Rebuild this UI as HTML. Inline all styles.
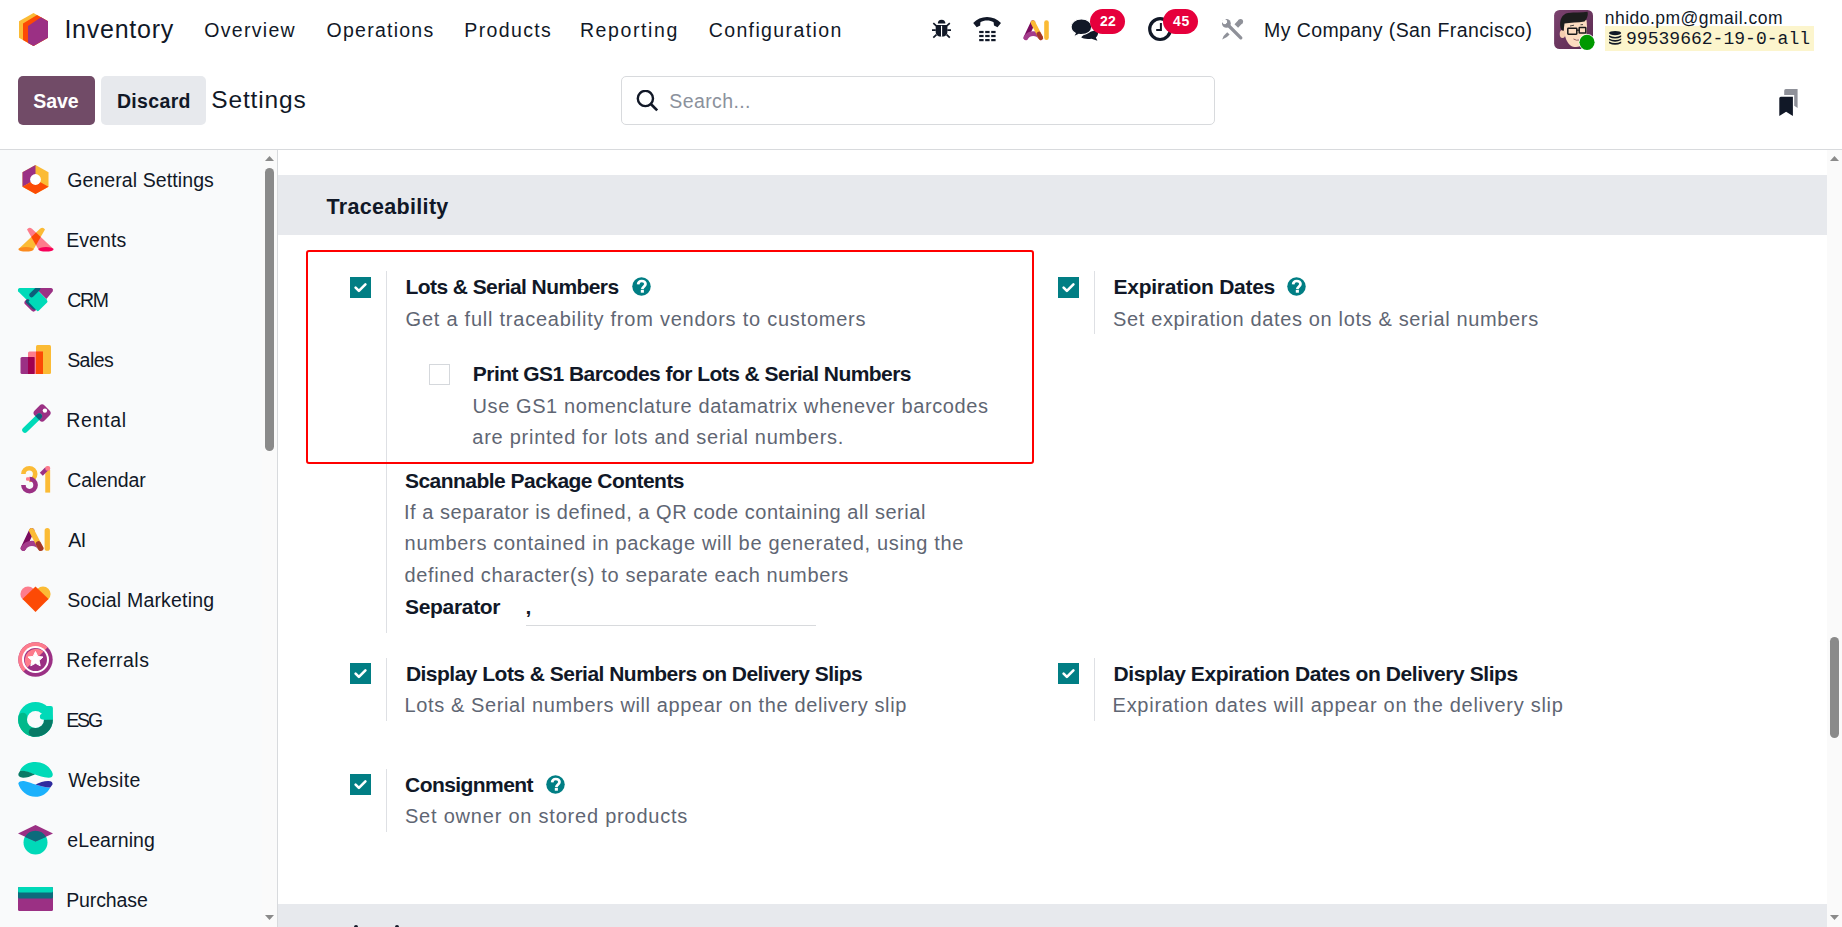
<!DOCTYPE html>
<html><head><meta charset="utf-8"><title>Settings</title>
<style>
html,body{margin:0;padding:0;}
body{width:1842px;height:927px;overflow:hidden;position:relative;background:#fff;font-family:"Liberation Sans",sans-serif;}
.t{position:absolute;white-space:pre;}
.b{position:absolute;display:block;}
</style></head><body>
<div class="b" style="left:0px;top:149px;width:1842px;height:1px;background:#d8dadd"></div>
<div class="b" style="left:0px;top:150px;width:277px;height:777px;background:#f9fafb"></div>
<div class="b" style="left:277px;top:150px;width:1px;height:777px;background:#d8dadd"></div>
<div class="b" style="left:262px;top:150px;width:15px;height:777px;background:#fafafa"></div>
<div class="b" style="left:265px;top:168px;width:9px;height:283px;background:#8a8a8a;border-radius:4.5px"></div>
<svg class="b" style="left:262px;top:150px" width="15" height="777" viewBox="0 0 15 777"><path d="M3 11 L7.5 6 L12 11 Z" fill="#8a8a8a"/><path d="M3 765 L12 765 L7.5 770 Z" fill="#8a8a8a"/></svg>
<div class="b" style="left:1827px;top:150px;width:15px;height:777px;background:#fafafa"></div>
<div class="b" style="left:1830px;top:637px;width:9px;height:101px;background:#8a8a8a;border-radius:4.5px"></div>
<svg class="b" style="left:1827px;top:150px" width="15" height="777" viewBox="0 0 15 777"><path d="M3 11 L7.5 6 L12 11 Z" fill="#8a8a8a"/><path d="M3 765 L12 765 L7.5 770 Z" fill="#8a8a8a"/></svg>
<div class="b" style="left:278px;top:175px;width:1549px;height:60px;background:#e7e9ed"></div>
<div class="b" style="left:278px;top:904px;width:1549px;height:23px;background:#e7e9ed"></div>
<div class="b" style="left:18px;top:76px;width:77px;height:49px;background:#714b67;border-radius:5px"></div>
<div class="b" style="left:101px;top:76px;width:105px;height:49px;background:#e7e9ed;border-radius:5px"></div>
<div class="b" style="left:621px;top:76px;width:594px;height:49px;border:1px solid #d8dadd;border-radius:5px;box-sizing:border-box;background:#fff"></div>
<svg class="b" style="left:636px;top:90px" width="24" height="24" viewBox="0 0 24 24"><circle cx="9.4" cy="8.5" r="7.6" fill="none" stroke="#111827" stroke-width="2.4"/><path d="M14.6 13.8 L21.2 20.4" stroke="#111827" stroke-width="2.7"/></svg>
<svg class="b" style="left:1770px;top:82px" width="36" height="40" viewBox="0 0 36 40"><path d="M15.8 7.1 H27.6 V26 L24.2 23.8 V13.1 H14.2 V8.7 Q14.2 7.1 15.8 7.1 Z" fill="#8f9199"/><path d="M10.8 14.7 H22.9 V33.9 L16.1 29.8 L9.3 33.9 V16.2 Q9.3 14.7 10.8 14.7 Z" fill="#111827"/></svg>
<div class="b" style="left:386px;top:271px;width:1px;height:362px;background:#dee0e4"></div>
<div class="b" style="left:386px;top:658px;width:1px;height:63px;background:#dee0e4"></div>
<div class="b" style="left:386px;top:769px;width:1px;height:63px;background:#dee0e4"></div>
<div class="b" style="left:1094px;top:271px;width:1px;height:63px;background:#dee0e4"></div>
<div class="b" style="left:1094px;top:658px;width:1px;height:63px;background:#dee0e4"></div>
<svg class="b" style="left:350px;top:277px" width="21" height="21" viewBox="0 0 21 21"><rect x="0" y="0" width="21" height="21" fill="#017e84"/><path d="M5.6 10.6 L8.9 13.9 L15.4 7.4" fill="none" stroke="#fff" stroke-width="2.6" stroke-linecap="round" stroke-linejoin="round"/></svg>
<svg class="b" style="left:429px;top:364px" width="21" height="21" viewBox="0 0 21 21"><rect x="0.5" y="0.5" width="20" height="20" fill="#fff" stroke="#d5d8dc"/></svg>
<svg class="b" style="left:350px;top:663px" width="21" height="21" viewBox="0 0 21 21"><rect x="0" y="0" width="21" height="21" fill="#017e84"/><path d="M5.6 10.6 L8.9 13.9 L15.4 7.4" fill="none" stroke="#fff" stroke-width="2.6" stroke-linecap="round" stroke-linejoin="round"/></svg>
<svg class="b" style="left:350px;top:774px" width="21" height="21" viewBox="0 0 21 21"><rect x="0" y="0" width="21" height="21" fill="#017e84"/><path d="M5.6 10.6 L8.9 13.9 L15.4 7.4" fill="none" stroke="#fff" stroke-width="2.6" stroke-linecap="round" stroke-linejoin="round"/></svg>
<svg class="b" style="left:1058px;top:277px" width="21" height="21" viewBox="0 0 21 21"><rect x="0" y="0" width="21" height="21" fill="#017e84"/><path d="M5.6 10.6 L8.9 13.9 L15.4 7.4" fill="none" stroke="#fff" stroke-width="2.6" stroke-linecap="round" stroke-linejoin="round"/></svg>
<svg class="b" style="left:1058px;top:663px" width="21" height="21" viewBox="0 0 21 21"><rect x="0" y="0" width="21" height="21" fill="#017e84"/><path d="M5.6 10.6 L8.9 13.9 L15.4 7.4" fill="none" stroke="#fff" stroke-width="2.6" stroke-linecap="round" stroke-linejoin="round"/></svg>
<svg class="b" style="left:631.5px;top:276.8px" width="19" height="19" viewBox="0 0 19 19"><circle cx="9.5" cy="9.5" r="9.25" fill="#017e84"/><path d="M6.1 7.4 C6.3 5.2 7.8 4 9.8 4 C11.9 4 13.5 5.3 13.5 7.1 C13.5 9.4 10.5 9.5 10.3 12.2" fill="none" stroke="#fff" stroke-width="2.7"/><rect x="8.8" y="12.9" width="3.1" height="2.8" fill="#fff"/></svg>
<svg class="b" style="left:1287.05px;top:276.85px" width="19" height="19" viewBox="0 0 19 19"><circle cx="9.5" cy="9.5" r="9.25" fill="#017e84"/><path d="M6.1 7.4 C6.3 5.2 7.8 4 9.8 4 C11.9 4 13.5 5.3 13.5 7.1 C13.5 9.4 10.5 9.5 10.3 12.2" fill="none" stroke="#fff" stroke-width="2.7"/><rect x="8.8" y="12.9" width="3.1" height="2.8" fill="#fff"/></svg>
<svg class="b" style="left:545.9px;top:774.9px" width="19" height="19" viewBox="0 0 19 19"><circle cx="9.5" cy="9.5" r="9.25" fill="#017e84"/><path d="M6.1 7.4 C6.3 5.2 7.8 4 9.8 4 C11.9 4 13.5 5.3 13.5 7.1 C13.5 9.4 10.5 9.5 10.3 12.2" fill="none" stroke="#fff" stroke-width="2.7"/><rect x="8.8" y="12.9" width="3.1" height="2.8" fill="#fff"/></svg>
<div class="b" style="left:526px;top:625px;width:290px;height:1px;background:#d8dadd"></div>
<div class="b" style="left:306px;top:250px;width:728px;height:214px;border:2px solid #ff0000;border-radius:3px;box-sizing:border-box"></div>
<svg class="b" style="left:19px;top:13px" width="29" height="33" viewBox="0 0 29 33"><path d="M14.5 0 L29 8.3 L29 24.7 L14.5 33 L0 24.7 L0 8.3 Z" fill="#fbbb35"/><path d="M18 2 L29 8.3 L29 24.7 L14.5 33 L4 27 L4 10.5 Z" fill="#fc4a05"/><path d="M22 4.3 L29 8.3 L29 24.7 L14.5 33 L9 29.9 L9 13 Z" fill="#9b3084"/></svg>
<svg class="b" style="left:926px;top:14px" width="32" height="30" viewBox="0 0 32 30"><path d="M11.8 9.6 A3.8 3.8 0 0 1 19.4 9.6 Z" fill="#111827"/><path d="M9.7 11 H21.4 V18 C21.4 21 19 22.7 15.55 22.7 C12 22.7 9.7 21 9.7 18 Z" fill="#111827"/><rect x="15" y="11.8" width="1.1" height="11" fill="#fff"/><path d="M7.3 9.1 L10.3 11.8 M23.8 9.1 L20.8 11.8 M6 16.2 H9.8 M25 16.2 H21.3 M7.3 23.6 L10.5 20.6 M23.8 23.6 L20.6 20.6" stroke="#111827" stroke-width="1.7"/></svg>
<svg class="b" style="left:968px;top:12px" width="40" height="34" viewBox="0 0 40 34"><path d="M5.2 11 C12 3 26 3 33 11 L29.5 15.3 L26 13.5 L25.6 10.2 C22 8 16 8 12.4 10.2 L12.2 13.5 L8.7 15.3 Z" fill="#111827"/><g fill="#111827"><rect x="11.2" y="18.9" width="4.4" height="2.2"/><rect x="17.2" y="18.9" width="4.4" height="2.2"/><rect x="23.2" y="18.9" width="4.4" height="2.2"/><rect x="11.2" y="22.9" width="4.4" height="2.2"/><rect x="17.2" y="22.9" width="4.4" height="2.2"/><rect x="23.2" y="22.9" width="4.4" height="2.2"/><rect x="11.2" y="27" width="4.4" height="2.2"/><rect x="17.2" y="27" width="4.4" height="2.2"/><rect x="23.2" y="27" width="4.4" height="2.2"/></g></svg>
<svg class="b" style="left:1021.8px;top:18.8px" width="28.4" height="22.4" viewBox="-1.2 -1.2 28.4 22.4"><path d="M9.8 2.4 L2.6 17.6" stroke="#7a0b5e" stroke-width="4.6" stroke-linecap="round"/><path d="M2.6 17.6 C6 12.2 13.8 12 17.6 17.6" fill="none" stroke="#a43c8c" stroke-width="4.6" stroke-linecap="round"/><path d="M9.8 2.4 L17.6 17.6" stroke="#fbbb35" stroke-width="4.6" stroke-linecap="round"/><path d="M15.6 13.8 L17.6 17.6" stroke="#a3352b" stroke-width="4.6" stroke-linecap="round"/><path d="M23.3 2.4 V17.6" stroke="#fbbb35" stroke-width="4.6" stroke-linecap="round"/></svg>
<svg class="b" style="left:1066px;top:12px" width="40" height="34" viewBox="0 0 40 34"><path d="M15.2 25.3 C17 23 22 20.5 27 19 L30.5 18 C32.8 20 32.5 23.5 29.8 25.6 L31.4 28.8 L25.5 26.8 C21 27.3 17 27 15.2 25.3 Z" fill="#111827"/><path d="M15.4 7 C21.5 7 25.7 10.3 25.7 14.8 C25.7 19.3 21.5 22.6 15.4 22.6 C14.5 22.6 13.6 22.5 12.8 22.4 L7.3 24.9 L9.3 21.2 C6.6 19.8 5.1 17.5 5.1 14.8 C5.1 10.3 9.3 7 15.4 7 Z" fill="#111827" stroke="#fff" stroke-width="1.1"/></svg>
<svg class="b" style="left:1148px;top:17px" width="25" height="25" viewBox="0 0 25 25"><circle cx="12.1" cy="12.1" r="10.4" fill="none" stroke="#111827" stroke-width="3.2"/><path d="M12.9 6 V12.9 H8.2" fill="none" stroke="#111827" stroke-width="2"/></svg>
<div class="b" style="left:1090px;top:9px;width:35px;height:25px;background:#e6003c;border-radius:12.5px"></div>
<div class="b" style="left:1163px;top:9px;width:35px;height:25px;background:#e6003c;border-radius:12.5px"></div>
<svg class="b" style="left:1215px;top:12px" width="35" height="35" viewBox="0 0 35 35"><circle cx="11.4" cy="11.4" r="4.4" fill="#8f9199"/><circle cx="9.9" cy="9.9" r="2.3" fill="#fff"/><path d="M6.5 9.5 L9.5 6.5 L11.5 8.5 L8.5 11.5 Z" fill="#fff"/><path d="M12.5 12.5 L25.8 25.8" stroke="#8f9199" stroke-width="3.3" stroke-linecap="round"/><path d="M21.3 14 L25.8 9.3" stroke="#8f9199" stroke-width="5"/><circle cx="25.6" cy="9.5" r="2.5" fill="#8f9199"/><path d="M12.2 20.2 L14.6 22.6 Q12 26 7.2 27.6 Q8.5 23 12.2 20.2 Z" fill="#8f9199"/></svg>
<svg class="b" style="left:1550px;top:6px" width="48" height="48" viewBox="0 0 48 48"><defs><linearGradient id="avg" x1="0" y1="0" x2="1" y2="1"><stop offset="0" stop-color="#7b426f"/><stop offset="1" stop-color="#5a2a4f"/></linearGradient></defs><rect x="4.1" y="3.9" width="38.9" height="39.1" rx="5.5" fill="url(#avg)"/><path d="M13.5 16 L36.5 14 C37.5 22 37 32 33 38 C30.5 41.5 24 42 20.5 39.5 C16 36 13.5 28 13.5 16 Z" fill="#fcdcc0"/><ellipse cx="12.5" cy="28" rx="2.8" ry="4" fill="#f6cdb0"/><path d="M10.5 22 C9 14 12 8 18 7 C25 6 32 7 37.5 5.8 C38.5 9 37 13 34.5 15.5 C28 16.5 20 16.8 14.5 17.5 L13.5 25 C12 24.5 11 23.5 10.5 22 Z" fill="#1d1d1d"/><rect x="17.8" y="22.2" width="9" height="6" rx="0.6" fill="none" stroke="#1a1a1a" stroke-width="1.5"/><rect x="29.2" y="21.5" width="6.6" height="5.6" rx="0.6" fill="none" stroke="#1a1a1a" stroke-width="1.5"/><path d="M26.8 24.2 H29.2" stroke="#1a1a1a" stroke-width="1.2"/><path d="M20 20 L24 19.2 M30.5 18.8 L33 18.6" stroke="#333" stroke-width="0.9"/><path d="M23.5 33 Q26.5 34.8 29.5 34" fill="#fff" stroke="#7a3d3d" stroke-width="0.8"/><circle cx="37" cy="36.3" r="8.3" fill="#fff"/><circle cx="37" cy="36.3" r="7.6" fill="#009900"/></svg>
<div class="b" style="left:1605px;top:26px;width:209px;height:25px;background:#fcf5cd"></div>
<svg class="b" style="left:1608.7px;top:31px" width="13" height="15" viewBox="0 0 13 15"><ellipse cx="6.1" cy="2.1" rx="6.1" ry="2.1" fill="#111827"/><path d="M0 4.3 Q6.1 7.5 12.2 4.3 L12.2 6.0 Q6.1 9.2 0 6.0 Z" fill="#111827"/><path d="M0 7.4 Q6.1 10.6 12.2 7.4 L12.2 9.1 Q6.1 12.3 0 9.1 Z" fill="#111827"/><path d="M0 10.5 Q6.1 13.7 12.2 10.5 L12.2 12.2 Q6.1 15.4 0 12.2 Z" fill="#111827"/></svg>
<svg class="b" style="left:22px;top:164.8px" width="27" height="29" viewBox="0 0 28 30"><path d="M14 0 L27.5 7.5 L27.5 22.5 L14 30 L0.5 22.5 L0.5 7.5 Z" fill="#fbbb35"/><path d="M14 0 L0.5 7.5 L0.5 22.5 L14 15 Z" fill="#9b3084"/><path d="M0.5 22.5 L14 30 L27.5 22.5 L14 15 Z" fill="#fc4a05"/><circle cx="14" cy="15" r="5.6" fill="#fff"/></svg>
<svg class="b" style="left:18px;top:227px" width="36" height="25" viewBox="0 0 36 25"><defs><clipPath id="evy"><path d="M22 1.8 Q25 -0.6 27 2.6 L15.5 22.5 L0.5 22 Z"/></clipPath></defs><path d="M22 1.8 Q25 -0.6 27 2.6 L15.5 22.5 L0.5 22 Z" fill="#fbbb35"/><path d="M9 2.6 Q11 -0.6 14 1.8 L35.5 22 L20.5 22.5 Z" fill="#fd7c8c"/><path d="M9 2.6 Q11 -0.6 14 1.8 L35.5 22 L20.5 22.5 Z" fill="#fc4a05" clip-path="url(#evy)"/><ellipse cx="8" cy="22.3" rx="7.6" ry="2.3" fill="#fb8a1e"/><ellipse cx="28" cy="22.3" rx="7.6" ry="2.3" fill="#f8005a"/></svg>
<svg class="b" style="left:14px;top:282px" width="44" height="34" viewBox="0 0 44 34"><path d="M5.5 6 H21.6 L33.2 18 L23.5 28.6 L4.2 9.6 Q3.2 6.8 5.5 6 Z" fill="#00dab8"/><path d="M21.6 6 H37.2 Q39.8 6.6 38.6 9.5 L32.4 17 Z" fill="#9b3084"/><path d="M13.5 20.5 L19.5 26.5" stroke="#9b3084" stroke-width="6" stroke-linecap="round"/><path d="M13.8 19.4 L20.2 25.6" stroke="#0d5f7a" stroke-width="4.2" stroke-linecap="round"/><defs><clipPath id="crmc"><rect x="0" y="6" width="44" height="28"/></clipPath></defs><path d="M17.6 13 L24 6.6" stroke="#0d5f7a" stroke-width="4.6" stroke-linecap="round" clip-path="url(#crmc)"/><path d="M24.2 12.4 L32.2 19.5 L23.8 27.8 L16 19.7 Z" fill="#00dab8" stroke="#00dab8" stroke-width="2.6" stroke-linejoin="round"/></svg>
<svg class="b" style="left:20px;top:345px" width="31" height="29" viewBox="0 0 31 29"><rect x="16" y="0" width="15" height="29" rx="1.5" fill="#fbbb35"/><rect x="8" y="6.5" width="15" height="22.5" rx="1.5" fill="#fd7c8c"/><rect x="16" y="6.5" width="7" height="22.5" fill="#fc4a05"/><rect x="0.5" y="12" width="14" height="17" rx="1.5" fill="#9b3084"/><rect x="8" y="12" width="6.5" height="17" fill="#a0004f"/></svg>
<svg class="b" style="left:16px;top:398px" width="42" height="40" viewBox="0 0 42 40"><defs><clipPath id="rkh"><rect x="19.1" y="8" width="14" height="14" rx="3.5" transform="rotate(45 26.1 15)"/></clipPath></defs><rect x="19.1" y="8" width="14" height="14" rx="3.5" transform="rotate(45 26.1 15)" fill="#9b3084"/><circle cx="28.9" cy="12.6" r="2.2" fill="#fff"/><path d="M9 32 L23.2 18.2" stroke="#00dab8" stroke-width="5.6" stroke-linecap="round"/><path d="M9 32 L23.2 18.2" stroke="#0d5f7a" stroke-width="5.6" stroke-linecap="round" clip-path="url(#rkh)"/></svg>
<svg class="b" style="left:14px;top:460px" width="44" height="40" viewBox="0 0 44 40"><path d="M9.4 14.1 A5.9 5.9 0 1 1 15.3 20" fill="none" stroke="#fbbb35" stroke-width="4.6"/><path d="M15.5 19 A6.1 6.1 0 1 1 9.4 25.1" fill="none" stroke="#9b3084" stroke-width="4.6"/><rect x="12" y="17.2" width="4" height="3.5" rx="1.2" fill="#fd7c8c"/><path d="M33.7 10 V32.6" stroke="#fbbb35" stroke-width="4.9"/><path d="M27.3 14.3 L32.8 8.8" stroke="#9b3084" stroke-width="4.2"/><rect x="31.3" y="6" width="4.9" height="4.8" rx="2" fill="#fd7c8c"/></svg>
<svg class="b" style="left:18.615384615384617px;top:525.56px" width="32.77" height="26.88" viewBox="-1.2 -1.2 28.4 22.4"><path d="M9.8 2.4 L2.6 17.6" stroke="#7a0b5e" stroke-width="4.6" stroke-linecap="round"/><path d="M2.6 17.6 C6 12.2 13.8 12 17.6 17.6" fill="none" stroke="#a43c8c" stroke-width="4.6" stroke-linecap="round"/><path d="M9.8 2.4 L17.6 17.6" stroke="#fbbb35" stroke-width="4.6" stroke-linecap="round"/><path d="M15.6 13.8 L17.6 17.6" stroke="#a3352b" stroke-width="4.6" stroke-linecap="round"/><path d="M23.3 2.4 V17.6" stroke="#fbbb35" stroke-width="4.6" stroke-linecap="round"/></svg>
<svg class="b" style="left:20px;top:586px" width="31" height="27" viewBox="0 0 31 27"><circle cx="8" cy="8" r="7.6" fill="#fd7c8c"/><circle cx="23" cy="8" r="7.6" fill="#fbbb35"/><path d="M2.5 13 L15.5 26 L28.5 13 L15.5 0.5 Z" fill="#fc4a05"/></svg>
<svg class="b" style="left:18px;top:642px" width="35" height="35" viewBox="0 0 35 35"><circle cx="17.5" cy="17.5" r="17.2" fill="#9b3084"/><path d="M5.3 29.7 A17.2 17.2 0 0 1 29.7 5.3 Z" fill="#fd7c8c"/><circle cx="17.5" cy="17.5" r="13.5" fill="#fff"/><circle cx="17.5" cy="17.5" r="11.5" fill="#9b3084"/><path d="M9.4 25.6 A11.5 11.5 0 0 1 25.6 9.4 Z" fill="#fd7c8c"/><path d="M17.5 9.5 L19.8 14.4 L25 15 L21.1 18.6 L22.2 23.8 L17.5 21.2 L12.8 23.8 L13.9 18.6 L10 15 L15.2 14.4 Z" fill="#fff" stroke="#fff" stroke-width="1" stroke-linejoin="round"/></svg>
<svg class="b" style="left:14px;top:698px" width="44" height="44" viewBox="0 0 44 44"><circle cx="21.5" cy="21.4" r="17.4" fill="#00dab8"/><path d="M8.75 19.15 A12.95 12.95 0 0 0 19.25 34.15" fill="none" stroke="#00b98b" stroke-width="8.9" stroke-linecap="round"/><path d="M19.25 34.15 A12.95 12.95 0 0 0 34.45 21.4" fill="none" stroke="#077a66" stroke-width="8.9"/><circle cx="19.25" cy="34.15" r="4.45" fill="#077a66"/><circle cx="21.5" cy="21.4" r="8.5" fill="#f9fafb"/><path d="M30 8 H36.9 Q38.9 8 38.9 10 V21.4 H30 Z" fill="#00dab8"/><rect x="25.9" y="15.8" width="7" height="5.6" rx="2.7" fill="#00dab8"/><rect x="29" y="18" width="4" height="3.4" fill="#00dab8"/></svg>
<svg class="b" style="left:14px;top:758px" width="44" height="44" viewBox="0 0 44 44"><path d="M5.8 12.8 C9 6.5 15 4 21.5 4 C30 4 37 9.5 38.8 16 C39 19 37 19.8 34.5 19.7 C29 19.5 25 17.5 21 16.4 C15 14.8 9.5 12.5 5.8 12.8 Z" fill="#00dab8"/><path d="M6 13 C10 12.3 15 14 21 16.4 C16 18.5 12.5 19.8 9 19.7 C6 19.6 3.8 18 4.5 15.5 Z" fill="#077a66"/><path d="M4.3 25.5 C5 23.3 8 22.8 11 23.3 C15 24 18 25.5 21.5 26.5 C26 28 31 29.5 36.3 29.5 C33.5 35.5 27.5 38.8 21.5 38.8 C13 38.8 6 32.5 4.3 25.5 Z" fill="#1cb1fc"/><path d="M21.5 26.5 C25 24.8 30 23 34 23 C37.5 22.8 39 24.5 38.5 26.5 L36.3 29.5 C31 29.5 26 28 21.5 26.5 Z" fill="#2e2a9e"/></svg>
<svg class="b" style="left:18px;top:825px" width="35" height="30" viewBox="0 0 35 30"><circle cx="17.5" cy="17.5" r="12" fill="#00d9b8"/><path d="M0 8.5 L17.5 0 L35 8.5 L17.5 16.5 Z" fill="#9b3084"/><path d="M7 12 A12 12 0 0 1 28 12 L17.5 16.5 Z" fill="#0d6b7c"/></svg>
<svg class="b" style="left:18px;top:887px" width="35" height="25" viewBox="0 0 35 25"><rect x="0" y="0" width="35" height="24" rx="1.5" fill="#9b3084"/><rect x="0" y="0" width="35" height="11.5" rx="1.5" fill="#0d6b7c"/><rect x="0" y="0" width="35" height="5.5" rx="1.5" fill="#00d9b8"/></svg>
<div class="t" style="left:64.4px;top:17.0px;font-family:'Liberation Sans',sans-serif;font-size:25px;line-height:25px;font-weight:400;letter-spacing:0.762px;color:#111827">Inventory</div>
<div class="t" style="left:204.2px;top:21.0px;font-family:'Liberation Sans',sans-serif;font-size:19.5px;line-height:19.5px;font-weight:400;letter-spacing:1.314px;color:#111827">Overview</div>
<div class="t" style="left:326.5px;top:21.0px;font-family:'Liberation Sans',sans-serif;font-size:19.5px;line-height:19.5px;font-weight:400;letter-spacing:1.256px;color:#111827">Operations</div>
<div class="t" style="left:464.3px;top:21.0px;font-family:'Liberation Sans',sans-serif;font-size:19.5px;line-height:19.5px;font-weight:400;letter-spacing:1.371px;color:#111827">Products</div>
<div class="t" style="left:579.9px;top:21.0px;font-family:'Liberation Sans',sans-serif;font-size:19.5px;line-height:19.5px;font-weight:400;letter-spacing:1.612px;color:#111827">Reporting</div>
<div class="t" style="left:708.7px;top:21.0px;font-family:'Liberation Sans',sans-serif;font-size:19.5px;line-height:19.5px;font-weight:400;letter-spacing:1.383px;color:#111827">Configuration</div>
<div class="t" style="left:1264.0px;top:21.0px;font-family:'Liberation Sans',sans-serif;font-size:19.5px;line-height:19.5px;font-weight:400;letter-spacing:0.408px;color:#111827">My Company (San Francisco)</div>
<div class="t" style="left:1604.7px;top:9.8px;font-family:'Liberation Sans',sans-serif;font-size:17.5px;line-height:17.5px;font-weight:400;letter-spacing:0.488px;color:#111827">nhido.pm@gmail.com</div>
<div class="t" style="left:1626.0px;top:29.9px;font-family:'Liberation Mono',sans-serif;font-size:18px;line-height:18px;font-weight:400;letter-spacing:0.025px;color:#111827">99539662-19-0-all</div>
<div class="t" style="left:1100.0px;top:14.0px;font-family:'Liberation Sans',sans-serif;font-size:14px;line-height:14px;font-weight:700;letter-spacing:0.3px;color:#ffffff">22</div>
<div class="t" style="left:1172.9px;top:14.0px;font-family:'Liberation Sans',sans-serif;font-size:14px;line-height:14px;font-weight:700;letter-spacing:0.8px;color:#ffffff">45</div>
<div class="t" style="left:33.2px;top:92.0px;font-family:'Liberation Sans',sans-serif;font-size:19.5px;line-height:19.5px;font-weight:700;letter-spacing:-0.067px;color:#ffffff">Save</div>
<div class="t" style="left:116.9px;top:92.0px;font-family:'Liberation Sans',sans-serif;font-size:19.5px;line-height:19.5px;font-weight:700;letter-spacing:0.35px;color:#111827">Discard</div>
<div class="t" style="left:211.3px;top:87.9px;font-family:'Liberation Sans',sans-serif;font-size:24.5px;line-height:24.5px;font-weight:400;letter-spacing:0.843px;color:#111827">Settings</div>
<div class="t" style="left:669.3px;top:92.0px;font-family:'Liberation Sans',sans-serif;font-size:19.5px;line-height:19.5px;font-weight:400;letter-spacing:0.388px;color:#8b919c">Search...</div>
<div class="t" style="left:67.2px;top:171.0px;font-family:'Liberation Sans',sans-serif;font-size:19.5px;line-height:19.5px;font-weight:400;letter-spacing:0.093px;color:#111827">General Settings</div>
<div class="t" style="left:66.2px;top:231.0px;font-family:'Liberation Sans',sans-serif;font-size:19.5px;line-height:19.5px;font-weight:400;letter-spacing:0.08px;color:#111827">Events</div>
<div class="t" style="left:67.2px;top:291.0px;font-family:'Liberation Sans',sans-serif;font-size:19.5px;line-height:19.5px;font-weight:400;letter-spacing:-1.25px;color:#111827">CRM</div>
<div class="t" style="left:67.2px;top:351.0px;font-family:'Liberation Sans',sans-serif;font-size:19.5px;line-height:19.5px;font-weight:400;letter-spacing:-0.575px;color:#111827">Sales</div>
<div class="t" style="left:66.2px;top:411.0px;font-family:'Liberation Sans',sans-serif;font-size:19.5px;line-height:19.5px;font-weight:400;letter-spacing:0.72px;color:#111827">Rental</div>
<div class="t" style="left:67.2px;top:471.0px;font-family:'Liberation Sans',sans-serif;font-size:19.5px;line-height:19.5px;font-weight:400;letter-spacing:-0.071px;color:#111827">Calendar</div>
<div class="t" style="left:68.2px;top:531.0px;font-family:'Liberation Sans',sans-serif;font-size:19.5px;line-height:19.5px;font-weight:400;letter-spacing:-0.4px;color:#111827">AI</div>
<div class="t" style="left:67.2px;top:591.0px;font-family:'Liberation Sans',sans-serif;font-size:19.5px;line-height:19.5px;font-weight:400;letter-spacing:0.18px;color:#111827">Social Marketing</div>
<div class="t" style="left:66.2px;top:651.0px;font-family:'Liberation Sans',sans-serif;font-size:19.5px;line-height:19.5px;font-weight:400;letter-spacing:0.45px;color:#111827">Referrals</div>
<div class="t" style="left:66.2px;top:711.0px;font-family:'Liberation Sans',sans-serif;font-size:19.5px;line-height:19.5px;font-weight:400;letter-spacing:-2.1px;color:#111827">ESG</div>
<div class="t" style="left:68.2px;top:771.0px;font-family:'Liberation Sans',sans-serif;font-size:19.5px;line-height:19.5px;font-weight:400;letter-spacing:0.333px;color:#111827">Website</div>
<div class="t" style="left:67.2px;top:831.0px;font-family:'Liberation Sans',sans-serif;font-size:19.5px;line-height:19.5px;font-weight:400;letter-spacing:0.125px;color:#111827">eLearning</div>
<div class="t" style="left:66.2px;top:891.0px;font-family:'Liberation Sans',sans-serif;font-size:19.5px;line-height:19.5px;font-weight:400;letter-spacing:-0.114px;color:#111827">Purchase</div>
<div class="t" style="left:326.5px;top:196.7px;font-family:'Liberation Sans',sans-serif;font-size:21.5px;line-height:21.5px;font-weight:700;letter-spacing:0.318px;color:#111827">Traceability</div>
<div class="t" style="left:405.6px;top:276.1px;font-family:'Liberation Sans',sans-serif;font-size:21px;line-height:21px;font-weight:700;letter-spacing:-0.585px;color:#111827">Lots &amp; Serial Numbers</div>
<div class="t" style="left:405.6px;top:308.7px;font-family:'Liberation Sans',sans-serif;font-size:20px;line-height:20px;font-weight:400;letter-spacing:0.758px;color:#5f6673">Get a full traceability from vendors to customers</div>
<div class="t" style="left:472.8px;top:363.1px;font-family:'Liberation Sans',sans-serif;font-size:21px;line-height:21px;font-weight:700;letter-spacing:-0.544px;color:#111827">Print GS1 Barcodes for Lots &amp; Serial Numbers</div>
<div class="t" style="left:472.5px;top:395.7px;font-family:'Liberation Sans',sans-serif;font-size:20px;line-height:20px;font-weight:400;letter-spacing:0.594px;color:#5f6673">Use GS1 nomenclature datamatrix whenever barcodes</div>
<div class="t" style="left:472.3px;top:426.8px;font-family:'Liberation Sans',sans-serif;font-size:20px;line-height:20px;font-weight:400;letter-spacing:0.736px;color:#5f6673">are printed for lots and serial numbers.</div>
<div class="t" style="left:405.0px;top:469.8px;font-family:'Liberation Sans',sans-serif;font-size:21px;line-height:21px;font-weight:700;letter-spacing:-0.536px;color:#111827">Scannable Package Contents</div>
<div class="t" style="left:404.0px;top:501.7px;font-family:'Liberation Sans',sans-serif;font-size:20px;line-height:20px;font-weight:400;letter-spacing:0.526px;color:#5f6673">If a separator is defined, a QR code containing all serial</div>
<div class="t" style="left:404.6px;top:533.1px;font-family:'Liberation Sans',sans-serif;font-size:20px;line-height:20px;font-weight:400;letter-spacing:0.668px;color:#5f6673">numbers contained in package will be generated, using the</div>
<div class="t" style="left:404.6px;top:564.5px;font-family:'Liberation Sans',sans-serif;font-size:20px;line-height:20px;font-weight:400;letter-spacing:0.632px;color:#5f6673">defined character(s) to separate each numbers</div>
<div class="t" style="left:405.0px;top:596.4px;font-family:'Liberation Sans',sans-serif;font-size:21px;line-height:21px;font-weight:700;letter-spacing:-0.312px;color:#111827">Separator</div>
<div class="t" style="left:525.6px;top:596.4px;font-family:'Liberation Sans',sans-serif;font-size:21px;line-height:21px;font-weight:700;letter-spacing:0.0px;color:#111827">,</div>
<div class="t" style="left:405.9px;top:663.2px;font-family:'Liberation Sans',sans-serif;font-size:21px;line-height:21px;font-weight:700;letter-spacing:-0.52px;color:#111827">Display Lots &amp; Serial Numbers on Delivery Slips</div>
<div class="t" style="left:404.5px;top:694.7px;font-family:'Liberation Sans',sans-serif;font-size:20px;line-height:20px;font-weight:400;letter-spacing:0.617px;color:#5f6673">Lots &amp; Serial numbers will appear on the delivery slip</div>
<div class="t" style="left:405.1px;top:773.8px;font-family:'Liberation Sans',sans-serif;font-size:21px;line-height:21px;font-weight:700;letter-spacing:-0.57px;color:#111827">Consignment</div>
<div class="t" style="left:405.0px;top:805.9px;font-family:'Liberation Sans',sans-serif;font-size:20px;line-height:20px;font-weight:400;letter-spacing:0.781px;color:#5f6673">Set owner on stored products</div>
<div class="t" style="left:1113.6px;top:275.9px;font-family:'Liberation Sans',sans-serif;font-size:21px;line-height:21px;font-weight:700;letter-spacing:-0.267px;color:#111827">Expiration Dates</div>
<div class="t" style="left:1113.0px;top:308.8px;font-family:'Liberation Sans',sans-serif;font-size:20px;line-height:20px;font-weight:400;letter-spacing:0.643px;color:#5f6673">Set expiration dates on lots &amp; serial numbers</div>
<div class="t" style="left:1113.6px;top:663.2px;font-family:'Liberation Sans',sans-serif;font-size:21px;line-height:21px;font-weight:700;letter-spacing:-0.407px;color:#111827">Display Expiration Dates on Delivery Slips</div>
<div class="t" style="left:1112.6px;top:694.9px;font-family:'Liberation Sans',sans-serif;font-size:20px;line-height:20px;font-weight:400;letter-spacing:0.719px;color:#5f6673">Expiration dates will appear on the delivery slip</div>
<div class="b" style="left:354px;top:925px;width:4px;height:2px;background:#111827;border-radius:2px 2px 0 0"></div>
<div class="b" style="left:395px;top:925px;width:4px;height:2px;background:#111827;border-radius:2px 2px 0 0"></div>
</body></html>
